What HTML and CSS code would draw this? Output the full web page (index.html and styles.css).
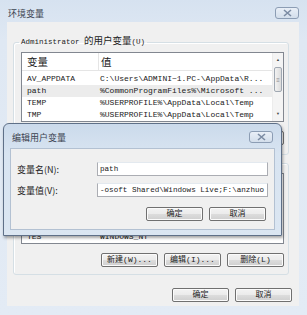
FILE: index.html
```html
<!doctype html>
<html>
<head>
<meta charset="utf-8">
<title>环境变量</title>
<link rel="stylesheet" href="styles.css">
</head>
<body>
<div class="window">
    <div class="titlebar">
        <span class="title">环境变量</span>
        <span class="close"><svg width="9" height="8" viewBox="0 0 9 8"><path d="M1 1L8 7M8 1L1 7" stroke="#7b8ba3" stroke-width="1.6"/></svg></span>
    </div>
    <div class="client">
        <fieldset class="group">
            <legend>Administrator <span class="cjk">的用户变量</span>(U)</legend>
            <div class="list short">
                <div class="row head"><span class="c1">变量</span><span class="c2">值</span></div>
                <div class="rows">
                    <div class="row"><span class="c1">AV_APPDATA</span><span class="c2">C:\Users\ADMINI~1.PC-\AppData\R...</span></div>
                    <div class="row sel"><span class="c1">path</span><span class="c2">%CommonProgramFiles%\Microsoft ...</span></div>
                    <div class="row"><span class="c1">TEMP</span><span class="c2">%USERPROFILE%\AppData\Local\Temp</span></div>
                    <div class="row"><span class="c1">TMP</span><span class="c2">%USERPROFILE%\AppData\Local\Temp</span></div>
                </div>
                <div class="scrollbar">
                    <span class="arrow">&#9650;</span>
                    <span class="thumb">&#8801;</span>
                    <span class="track"></span>
                    <span class="arrow">&#9660;</span>
                </div>
            </div>
            <div class="buttons">
                <button>新建(N)...</button>
                <button>编辑(E)...</button>
                <button>删除(D)</button>
            </div>
        </fieldset>
        <fieldset class="group second">
            <div class="list tall">
                <div class="rows">
                    <div class="row"><span class="c1">ComSpec</span><span class="c2">C:\Windows\system32\cmd.exe</span></div>
                    <div class="row"><span class="c1">FP_NO_HOST_C...</span><span class="c2">NO</span></div>
                    <div class="row"><span class="c1">NUMBER_OF_PR...</span><span class="c2">2</span></div>
                    <div class="row"><span class="c1">TES</span><span class="c2">WINDOWS_NT</span></div>
                </div>
            </div>
            <div class="buttons">
                <button>新建(W)...</button>
                <button>编辑(I)...</button>
                <button>删除(L)</button>
            </div>
        </fieldset>
        <div class="buttons footer">
            <button>确定</button>
            <button>取消</button>
        </div>
    </div>

    <div class="dialog">
        <div class="titlebar small">
            <span class="title">编辑用户变量</span>
            <span class="close"><svg width="9" height="8" viewBox="0 0 9 8"><path d="M1 1L8 7M8 1L1 7" stroke="#7b8ba3" stroke-width="1.6"/></svg></span>
        </div>
        <div class="dbody">
            <div class="field">
                <label>变量名(N):</label>
                <div class="input">path</div>
            </div>
            <div class="field">
                <label>变量值(V):</label>
                <div class="input">-osoft Shared\Windows Live;F:\anzhuo</div>
            </div>
            <div class="buttons dlg">
                <button>确定</button>
                <button>取消</button>
            </div>
        </div>
    </div>
</div>
</body>
</html>
```

FILE: styles.css
```css
html, body {
    margin: 0;
    padding: 0;
    background: #dbe5f1;
}
body {
    font-family: "Liberation Mono", "Noto Sans CJK SC", monospace;
    font-size: 8px;
    color: #1a1a1a;
}
.window {
    position: relative;
    width: 307px;
    height: 315px;
    overflow: hidden;
    background: linear-gradient(#d6e2f0, #dfe8f3 40px, #e3ebf5);
}
.titlebar {
    height: 22px;
    display: flex;
    align-items: center;
    justify-content: space-between;
    padding: 0 8px 0 8px;
}
.title {
    font-family: "Noto Sans CJK SC", sans-serif;
    font-size: 9px;
    color: #3b4350;
    margin-top: 5px;
}
.close {
    width: 22px;
    height: 10px;
    border: 1px solid #8c9db4;
    border-radius: 3px;
    background: linear-gradient(#e9eff7, #d3deeb);
    display: flex;
    align-items: center;
    justify-content: center;
    margin-top: 3px;
}
.client {
    margin: 0 8px 0 7px;
    height: 284px;
    background: #f0f0f0;
    padding-top: 14px;
    box-sizing: border-box;
    display: flex;
    flex-direction: column;
}
.group {
    margin: 0 10px 0 6px;
    padding: 0 4px 9px 7px;
    border: 1px solid #d5dfe5;
    border-radius: 3px;
    box-shadow: inset 1px 1px 0 #fff;
}
.group legend {
    padding: 0 2px;
    margin-left: -2px;
    line-height: 12px;
    height: 12px;
    font-size: 7.5px;
    color: #222;
}
.group legend .cjk {
    font-size: 9.5px;
}
.group.second {
    margin-top: 8px;
    padding-top: 9px;
    padding-bottom: 7px;
}
.list {
    position: relative;
    margin-top: 4px;
    border: 1px solid #828790;
    background: #fff;
    overflow: hidden;
}
.list.short {
    height: 68px;
}
.list.tall {
    margin-top: 0;
    height: 69px;
    display: flex;
    flex-direction: column;
    justify-content: flex-end;
}
.row {
    display: flex;
    height: 12px;
    line-height: 12px;
    white-space: nowrap;
}
.row.head {
    height: 17px;
    line-height: 17px;
    border-bottom: 1px solid #e5e5e5;
    font-family: "Noto Sans CJK SC", sans-serif;
    font-size: 10.5px;
}
.row.head .c1 {
    border-right: 1px solid #e5e5e5;
}
.rows {
    padding-top: 2px;
}
.row.sel {
    background: #ececec;
}
.c1 {
    width: 71px;
    padding-left: 5px;
    flex-shrink: 0;
}
.c2 {
    padding-left: 2px;
}
.scrollbar {
    position: absolute;
    top: 0;
    right: 0;
    bottom: 0;
    width: 10px;
    background: #f4f4f4;
    border-left: 1px solid #ececec;
    display: flex;
    flex-direction: column;
    align-items: center;
    font-size: 4px;
    color: #444;
}
.arrow {
    height: 14px;
    line-height: 14px;
}
.thumb {
    width: 8px;
    height: 25px;
    line-height: 25px;
    text-align: center;
    border: 1px solid #a0a8b2;
    border-radius: 2px;
    box-sizing: border-box;
    background: linear-gradient(90deg, #f2f2f2, #dcdcdc);
    font-size: 6px;
    color: #8a8a8a;
}
.track {
    flex: 1;
}
.buttons {
    display: flex;
    justify-content: flex-end;
    gap: 6px;
    margin-top: 9px;
}
button {
    width: 57px;
    height: 14px;
    padding: 0;
    border: 1px solid #707070;
    border-radius: 2px;
    background: linear-gradient(#f3f3f3, #ebebeb 50%, #dddddd 50%, #cfcfcf);
    box-shadow: inset 0 0 0 1px #fbfbfb;
    font-family: "Liberation Mono", "Noto Sans CJK SC", monospace;
    font-size: 8px;
    line-height: 12px;
    color: #222;
}
.buttons.footer {
    margin-top: 13px;
    padding-right: 7px;
}
.dialog {
    position: absolute;
    left: 3px;
    top: 123px;
    width: 279px;
    height: 113px;
    box-sizing: border-box;
    border: 1px solid #5f7088;
    border-radius: 6px 6px 0 0;
    background: linear-gradient(#cbdaeb, #d8e4f1 30px, #dbe6f2);
    box-shadow: 1px 2px 3px rgba(0, 0, 0, 0.35);
}
.titlebar.small {
    height: 24px;
    padding: 0 8px 0 8px;
}
.titlebar.small .title {
    margin-top: 2px;
}
.titlebar.small .close {
    margin-top: 2px;
}
.dbody {
    margin: 0 6px 0 6px;
    height: 82px;
    box-sizing: border-box;
    background: #f0f0f0;
    border: 1px solid #b3c1d2;
    padding: 13px 6px 0 6px;
}
.field {
    display: flex;
    align-items: center;
    margin-bottom: 7px;
}
.field label {
    width: 80px;
    font-family: "Noto Sans CJK SC", sans-serif;
    font-size: 9px;
    color: #222;
}
.input {
    width: 171px;
    height: 14px;
    line-height: 13px;
    box-sizing: border-box;
    border: 1px solid #abadb3;
    border-top-color: #e3e9ef;
    background: #fff;
    padding-left: 2px;
    overflow: hidden;
    white-space: nowrap;
    font-size: 7.6px;
}
.buttons.dlg {
    margin-top: 10px;
    padding-right: 2px;
}
```
